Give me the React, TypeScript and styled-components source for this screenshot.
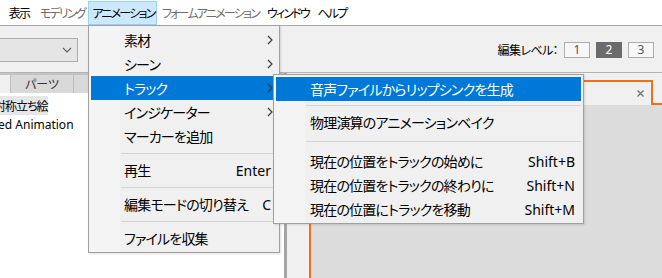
import styled, { createGlobalStyle } from "styled-components";

const GlobalStyle = createGlobalStyle`
    *, *::before, *::after { box-sizing: border-box; }
    html, body { margin: 0; padding: 0; background: #f0f0f0; overflow: hidden; }
    body { font-family: "Noto Sans", "Noto Sans CJK JP", sans-serif; }
`

const Screen = styled.div`
    position: relative;
    width: 662px;
    height: 278px;
    overflow: hidden;
    display: flex;
    flex-direction: column;
    background: #f0f0f0;
    font-feature-settings: "palt";
    color: #000;
`
const MenuBar = styled.div`
    display: flex;
    height: 26px;
    padding: 1px 0 0 1px;
    background: #fff;
    border-bottom: 1px solid #a9a9a9;
    font-size: 12px;
`
const BarItem = styled.div<{ $open?: boolean; $dim?: boolean; $w: number }>`
    width: ${p => p.$w}px;
    flex-shrink: 0;
    height: 24px;
    display: flex;
    align-items: center;
    justify-content: center;
    white-space: nowrap;
    letter-spacing: -1.8px;
    text-indent: 1.8px;
    border: 1px solid ${p => (p.$open ? "#99d1ff" : "transparent")};
    background: ${p => (p.$open ? "#cce8ff" : "transparent")};
    color: ${p => (p.$dim ? "#6d6d6d" : "#000")};
`
const Toolbar = styled.div`
    height: 47px;
    padding-top: 1px;
    display: flex;
    align-items: center;
    justify-content: space-between;
    border-bottom: 1px solid #b4b4b4;
`
const Combo = styled.div`
    width: 79px;
    height: 24px;
    margin-left: -1px;
    background: #e5e5e5;
    border: 1px solid #acacac;
    display: flex;
    align-items: center;
    justify-content: flex-end;
    padding-right: 5px;
`
const Level = styled.div`
    display: flex;
    align-items: center;
    gap: 6px;
    padding-right: 8px;
    font-size: 12px;
`
const LevelLabel = styled.span`
    letter-spacing: -0.6px;
`
const LevelBtn = styled.div<{ $on?: boolean }>`
    width: 26px;
    height: 16px;
    display: flex;
    align-items: center;
    justify-content: center;
    font-size: 12px;
    border: 1px solid ${p => (p.$on ? "#6b6b6b" : "#adadad")};
    background: ${p => (p.$on ? "#6b6b6b" : "#f7f7f7")};
    color: ${p => (p.$on ? "#fff" : "#555")};
`
const Body = styled.div`
    flex: 1;
    display: flex;
    min-height: 0;
`
const LeftPanel = styled.div`
    width: 284px;
    display: flex;
    flex-direction: column;
    background: #fff;
    overflow: hidden;
`
const TabStrip = styled.div`
    height: 22px;
    display: flex;
    align-items: flex-start;
    border-top: 2px solid #c3c3c3;
    background: #fff;
`
const PaneTab = styled.div<{ $active?: boolean; $w: number }>`
    width: ${p => p.$w}px;
    flex-shrink: 0;
    height: 18px;
    display: flex;
    align-items: center;
    justify-content: center;
    font-size: 12px;
    color: #333;
    background: ${p => (p.$active ? "#f0f0f0" : "#d9d9d9")};
    border-right: 1px solid #bdbdbd;
`
const List = styled.div`
    padding-top: 1px;
    font-size: 12px;
`
const Row = styled.div<{ $shift: number }>`
    height: 19px;
    display: flex;
    align-items: center;
    margin-left: ${p => -p.$shift}px;
    white-space: nowrap;
`
const RowText = styled.span<{ $sel?: boolean; $cjk?: boolean }>`
    height: 19px;
    display: flex;
    align-items: center;
    letter-spacing: ${p => (p.$cjk ? "-1px" : "0")};
    background: ${p => (p.$sel ? "#e6e6e6" : "transparent")};
`
const Divider = styled.div`
    width: 3px;
    background: #a5a5a5;
`
const RightArea = styled.div`
    flex: 1;
    display: flex;
    flex-direction: column;
    padding: 7px 0 0 22px;
    background: #f0f0f0;
`
const TabRow = styled.div`
    height: 25px;
    display: flex;
`
const DocTab = styled.div`
    width: 344px;
    border: 2px solid #f96d15;
    border-bottom: none;
    background: #f0f0f0;
    display: flex;
    align-items: center;
    justify-content: flex-end;
    padding-right: 7px;
`
const TabFill = styled.div`
    flex: 1;
    border-bottom: 2px solid #f96d15;
`
const Canvas = styled.div`
    flex: 1;
    background: #dcdcdc;
    border-left: 2px solid #f96d15;
`
const Dropdown = styled.div<{ $left: number; $top: number; $width: number }>`
    position: absolute;
    left: ${p => p.$left}px;
    top: ${p => p.$top}px;
    width: ${p => p.$width}px;
    padding: 2px;
    border: 1px solid #a0a0a0;
    background: linear-gradient(90deg, #f4f4f4 0 31px, #f0f0f0 31px);
    font-size: 14px;
    box-shadow: 1px 1px 2px rgba(0, 0, 0, 0.12);
`
const MenuRow = styled.div<{ $hl?: boolean; $pad: number }>`
    height: 24px;
    display: flex;
    align-items: center;
    padding: 0 6px 0 ${p => p.$pad}px;
    white-space: nowrap;
    background: ${p => (p.$hl ? "#0078d7" : "transparent")};
    color: ${p => (p.$hl ? "#fff" : "#000")};
`
const MenuLabel = styled.span`
    flex: 1;
    letter-spacing: -0.8px;
`
const SubArrow = styled.span`
    display: flex;
    margin-right: -2px;
`
const Sep = styled.div<{ $t: number; $b: number; $l: number }>`
    height: 1px;
    background: #d5d5d5;
    margin: ${p => p.$t}px 0 ${p => p.$b}px ${p => p.$l}px;
`

const Chevron = () => (
    <svg width="6" height="10" viewBox="0 0 6 10">
        <polyline points="1,1 5,5 1,9" fill="none" stroke="#3c3c3c" strokeWidth="1.2" />
    </svg>
)
const Caret = () => (
    <svg width="10" height="6" viewBox="0 0 10 6">
        <polyline points="1,1 5,5 9,1" fill="none" stroke="#606060" strokeWidth="1.1" />
    </svg>
)
const Close = () => (
    <svg width="7" height="7" viewBox="0 0 7 7">
        <path d="M0.5 0.5 L6.5 6.5 M6.5 0.5 L0.5 6.5" stroke="#707070" strokeWidth="1.3" />
    </svg>
)

const barItems = [
    { label: "表示", w: 34 },
    { label: "モデリング", w: 53, dim: true },
    { label: "アニメーション", w: 69, open: true },
    { label: "フォームアニメーション", w: 105, dim: true },
    { label: "ウィンドウ", w: 50 },
    { label: "ヘルプ", w: 38 },
]

const mainItems = [
    { label: "素材", sub: true },
    { label: "シーン", sub: true },
    { label: "トラック", sub: true, hl: true },
    { label: "インジケーター", sub: true },
    { label: "マーカーを追加" },
]

const trackItems = [
    { label: "現在の位置をトラックの始めに", key: "Shift+B" },
    { label: "現在の位置をトラックの終わりに", key: "Shift+N" },
    { label: "現在の位置にトラックを移動", key: "Shift+M" },
]

export default function App() {
    return (
        <Screen>
            <GlobalStyle />
            <MenuBar>
                {barItems.map(it => (
                    <BarItem key={it.label} $w={it.w} $dim={it.dim} $open={it.open}>
                        {it.label}
                    </BarItem>
                ))}
            </MenuBar>
            <Toolbar>
                <Combo>
                    <Caret />
                </Combo>
                <Level>
                    <LevelLabel>編集レベル：</LevelLabel>
                    <LevelBtn>1</LevelBtn>
                    <LevelBtn $on>2</LevelBtn>
                    <LevelBtn>3</LevelBtn>
                </Level>
            </Toolbar>
            <Body>
                <LeftPanel>
                    <TabStrip>
                        <PaneTab $active $w={11} />
                        <PaneTab $w={63}>パーツ</PaneTab>
                        <PaneTab $w={80} />
                    </TabStrip>
                    <List>
                        <Row $shift={28}>
                            <RowText $sel $cjk>左右対称立ち絵</RowText>
                        </Row>
                        <Row $shift={33}>
                            <RowText>Untitled Animation</RowText>
                        </Row>
                    </List>
                </LeftPanel>
                <Divider />
                <RightArea>
                    <TabRow>
                        <DocTab>
                            <Close />
                        </DocTab>
                        <TabFill />
                    </TabRow>
                    <Canvas />
                </RightArea>
            </Body>

            <Dropdown $left={88} $top={25} $width={192}>
                {mainItems.map(it => (
                    <MenuRow key={it.label} $pad={33} $hl={it.hl}>
                        <MenuLabel>{it.label}</MenuLabel>
                        {it.sub && (
                            <SubArrow>
                                <Chevron />
                            </SubArrow>
                        )}
                    </MenuRow>
                ))}
                <Sep $t={5} $b={4} $l={30} />
                <MenuRow $pad={33}>
                    <MenuLabel>再生</MenuLabel>
                    <span>Enter</span>
                </MenuRow>
                <Sep $t={5} $b={4} $l={30} />
                <MenuRow $pad={33}>
                    <MenuLabel>編集モードの切り替え</MenuLabel>
                    <span>C</span>
                </MenuRow>
                <Sep $t={5} $b={4} $l={30} />
                <MenuRow $pad={33}>
                    <MenuLabel>ファイルを収集</MenuLabel>
                </MenuRow>
            </Dropdown>

            <Dropdown $left={273} $top={74} $width={311}>
                <MenuRow $pad={34} $hl>
                    <MenuLabel>音声ファイルからリップシンクを生成</MenuLabel>
                </MenuRow>
                <Sep $t={4} $b={4} $l={30} />
                <MenuRow $pad={34}>
                    <MenuLabel>物理演算のアニメーションベイク</MenuLabel>
                </MenuRow>
                <Sep $t={7} $b={7} $l={30} />
                {trackItems.map(it => (
                    <MenuRow key={it.key} $pad={34}>
                        <MenuLabel>{it.label}</MenuLabel>
                        <span>{it.key}</span>
                    </MenuRow>
                ))}
            </Dropdown>
        </Screen>
    )
}
